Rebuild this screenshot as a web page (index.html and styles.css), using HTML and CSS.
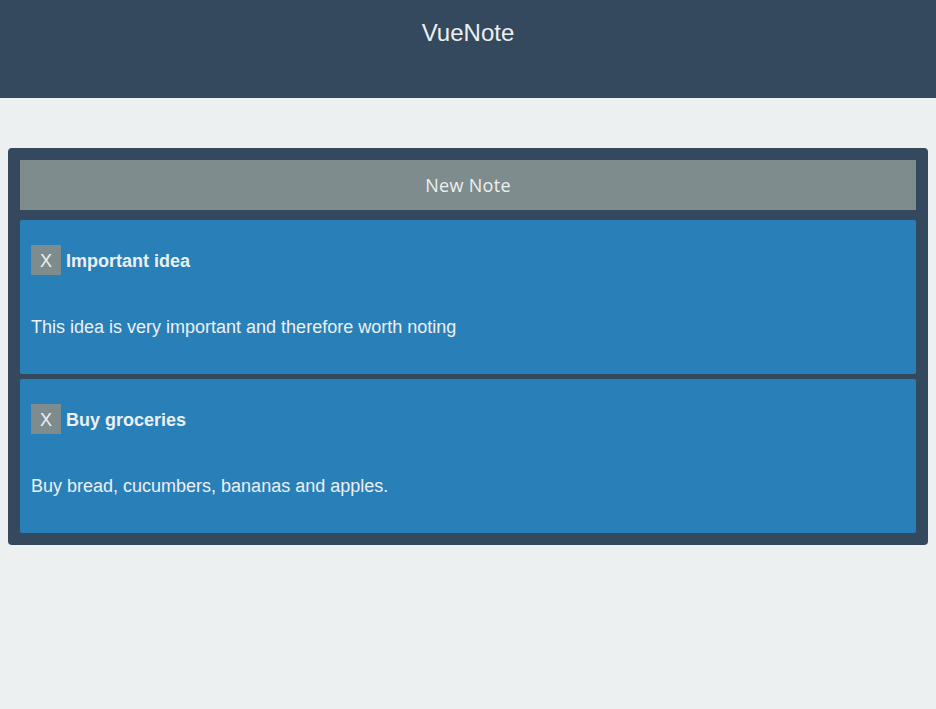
FILE: index.html
```html
<!DOCTYPE html>
<html>
<head>
<meta charset="utf-8">
<link rel="stylesheet" href="styles.css">
</head>
<body>
<header class="topbar"><h1 class="brand">VueNote</h1></header>
<main class="board">
  <button class="new-note">New Note</button>
  <div class="notes">
    <div class="note">
      <div class="note-head"><span class="close">X</span><span class="title">Important idea</span></div>
      <p class="note-body">This idea is very important and therefore worth noting</p>
    </div>
    <div class="note">
      <div class="note-head"><span class="close">X</span><span class="title">Buy groceries</span></div>
      <p class="note-body">Buy bread, cucumbers, bananas and apples.</p>
    </div>
  </div>
</main>
</body>
</html>
```
FILE: styles.css
```css
* { box-sizing: border-box; }
body {
  margin: 0;
  background: #ecf0f1;
  font-family: "Liberation Sans", Arial, sans-serif;
  color: #ecf0f1;
}
.topbar {
  background: #34495e;
  height: 98px;
  padding-top: 18px;
}
.brand {
  margin: 0;
  text-align: center;
  font-weight: normal;
  font-size: 24px;
  line-height: 30px;
  color: #ecf0f1;
}
.board {
  margin: 50px 8px 0;
  background: #34495e;
  border-radius: 4px;
  padding: 12px;
}
.new-note {
  display: block;
  width: 100%;
  height: 50px;
  border: 0;
  background: #7f8c8d;
  color: #ecf0f1;
  font-family: "Open Sans", sans-serif;
  font-size: 18px;
  letter-spacing: 0.3px;
  padding: 0;
}
.notes {
  display: flex;
  flex-direction: column;
  gap: 5px;
  margin-top: 10px;
}
.note {
  background: #2980b9;
  border-radius: 2px;
  padding: 25px 11px 0;
  height: 154px;
}
.note-head {
  display: flex;
  align-items: center;
  gap: 5px;
  height: 30px;
}
.close {
  width: 30px;
  height: 30px;
  padding-top: 2px;
  background: #7f8c8d;
  color: #ecf0f1;
  font-size: 18px;
  display: flex;
  align-items: center;
  justify-content: center;
}
.title {
  font-weight: bold;
  font-size: 18px;
  padding-top: 2px;
}
.note-body {
  margin: 41px 0 0;
  font-size: 18px;
  line-height: 22px;
}
```
